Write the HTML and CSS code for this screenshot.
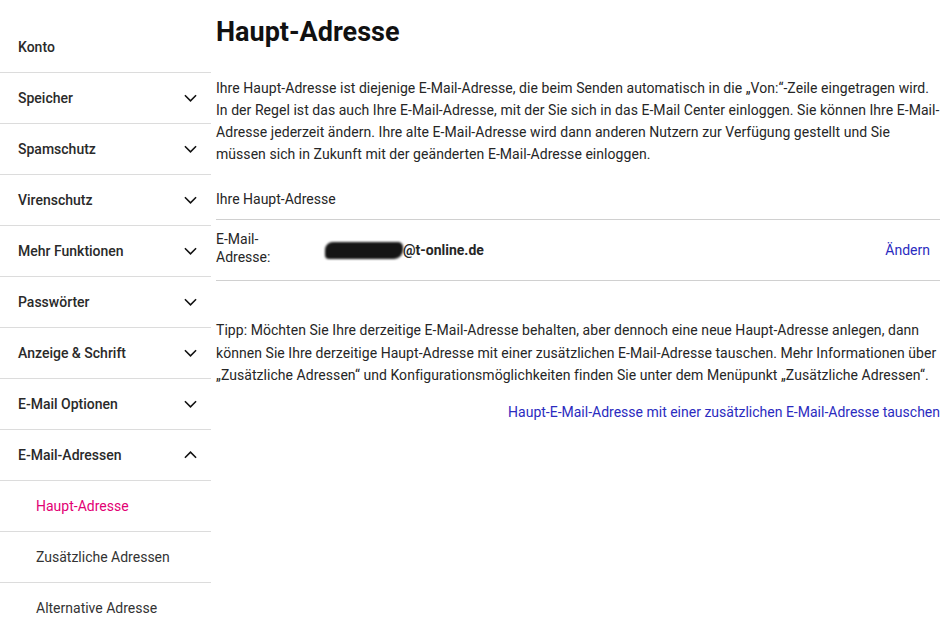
FILE: index.html
```html
<!DOCTYPE html>
<html lang="de">
<head>
<meta charset="utf-8">
<title>Haupt-Adresse</title>
<link rel="stylesheet" href="styles.css">
</head>
<body>
<div class="page">
  <aside class="sidebar">
    <div class="nav-item"><span>Konto</span></div>
    <div class="nav-item"><span>Speicher</span><svg class="chev" viewBox="0 0 14 8"><path d="M1 1l6 6 6-6"/></svg></div>
    <div class="nav-item"><span>Spamschutz</span><svg class="chev" viewBox="0 0 14 8"><path d="M1 1l6 6 6-6"/></svg></div>
    <div class="nav-item"><span>Virenschutz</span><svg class="chev" viewBox="0 0 14 8"><path d="M1 1l6 6 6-6"/></svg></div>
    <div class="nav-item"><span>Mehr Funktionen</span><svg class="chev" viewBox="0 0 14 8"><path d="M1 1l6 6 6-6"/></svg></div>
    <div class="nav-item"><span>Passwörter</span><svg class="chev" viewBox="0 0 14 8"><path d="M1 1l6 6 6-6"/></svg></div>
    <div class="nav-item"><span>Anzeige &amp; Schrift</span><svg class="chev" viewBox="0 0 14 8"><path d="M1 1l6 6 6-6"/></svg></div>
    <div class="nav-item"><span>E-Mail Optionen</span><svg class="chev" viewBox="0 0 14 8"><path d="M1 1l6 6 6-6"/></svg></div>
    <div class="nav-item"><span>E-Mail-Adressen</span><svg class="chev" viewBox="0 0 14 8"><path d="M1 7l6-6 6 6"/></svg></div>
    <div class="nav-sub active"><span>Haupt-Adresse</span></div>
    <div class="nav-sub"><span>Zusätzliche Adressen</span></div>
    <div class="nav-sub"><span>Alternative Adresse</span></div>
  </aside>
  <main class="content">
    <h1 class="title">Haupt-Adresse</h1>
    <p class="text">Ihre Haupt-Adresse ist diejenige E-Mail-Adresse, die beim Senden automatisch in die „Von:“-Zeile eingetragen wird. In der Regel ist das auch Ihre E-Mail-Adresse, mit der Sie sich in das E-Mail Center einloggen. Sie können Ihre E-Mail-Adresse jederzeit ändern. Ihre alte E-Mail-Adresse wird dann anderen Nutzern zur Verfügung gestellt und Sie müssen sich in Zukunft mit der geänderten E-Mail-Adresse einloggen.</p>
    <div class="label">Ihre Haupt-Adresse</div>
    <div class="addr-row">
      <div class="addr-key">E-Mail-<br>Adresse:</div>
      <div class="addr-val"><span class="scribble"></span>@t-online.de</div>
      <a class="link change" href="#">Ändern</a>
    </div>
    <p class="text tip">Tipp: Möchten Sie Ihre derzeitige E-Mail-Adresse behalten, aber dennoch eine neue Haupt-Adresse anlegen, dann können Sie Ihre derzeitige Haupt-Adresse mit einer zusätzlichen E-Mail-Adresse tauschen. Mehr Informationen über „Zusätzliche Adressen“ und Konfigurationsmöglichkeiten finden Sie unter dem Menüpunkt „Zusätzliche Adressen“.</p>
    <div class="swap"><a class="link" href="#">Haupt-E-Mail-Adresse mit einer zusätzlichen E-Mail-Adresse tauschen</a></div>
  </main>
</div>
</body>
</html>
```
FILE: styles.css
```css
* { box-sizing: border-box; }
html, body { margin: 0; padding: 0; background: #fff; }
body {
  font-family: Roboto, "Liberation Sans", sans-serif;
  font-size: 14px;
  color: #262626;
}
.page { display: flex; align-items: flex-start; }
.sidebar { width: 211px; flex: none; padding-top: 22px; }
.nav-item, .nav-sub {
  height: 51px;
  display: flex;
  align-items: center;
  justify-content: space-between;
  padding: 0 14px 0 18px;
  border-bottom: 1px solid #dcdcdc;
}
.nav-item span { font-weight: 500; font-size: 14px; color: #2a2a2a; }
.nav-sub { padding-left: 36px; }
.nav-sub span { font-size: 14px; color: #333; }
.nav-sub.active span { color: #e20074; }
.chev { width: 13px; height: 8px; fill: none; stroke: #111; stroke-width: 1.7; }
.content { flex: 1; padding: 0 10px 0 5px; }
.title { margin: 14px 0 0; font-size: 27px; font-weight: 700; line-height: 36px; color: #111; }
.text { margin: 27px 0 0; line-height: 22px; letter-spacing: 0.05px; }
.label { margin-top: 23px; line-height: 22px; padding-bottom: 9px; border-bottom: 1px solid #d0d0d0; }
.addr-row {
  display: flex; align-items: center;
  height: 61px;
  border-bottom: 1px solid #d0d0d0;
}
.addr-key { width: 109px; line-height: 18px; margin-top: -4px; }
.addr-val { flex: 1; font-weight: 700; display: flex; align-items: center; }
.scribble {
  display: inline-block; width: 78px; height: 17px;
  background: #151515; border-radius: 8px 5px 9px 4px;
  filter: blur(0.8px);
}
.link { color: #2b2bc0; text-decoration: none; }
.change { margin-right: 10px; }
.tip { margin-top: 38px; line-height: 22.5px; }
.swap { text-align: right; margin-top: 17px; }
```
